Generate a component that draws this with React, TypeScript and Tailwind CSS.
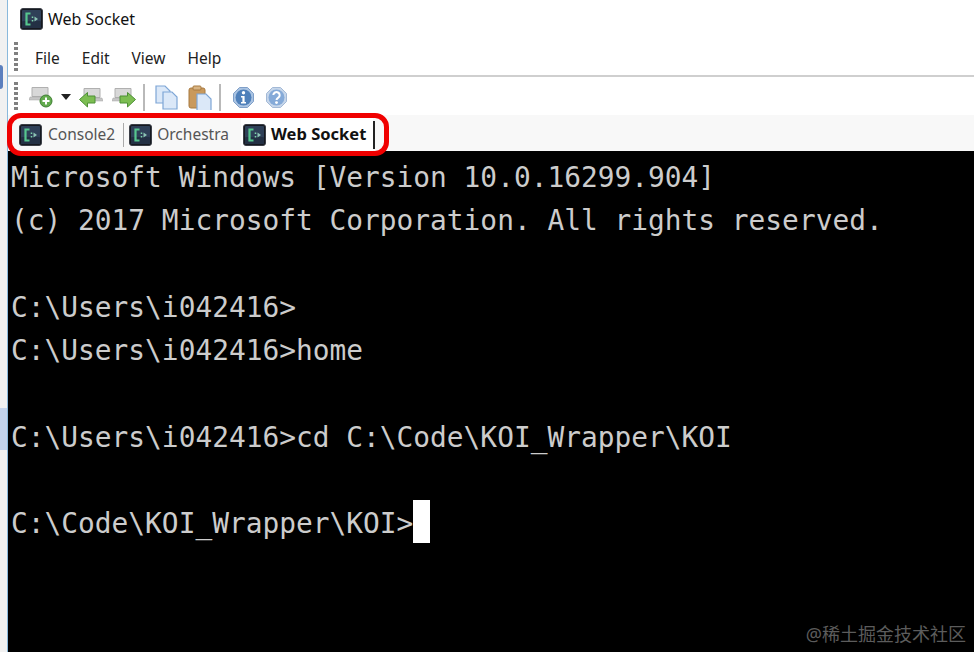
const lines = [
  "Microsoft Windows [Version 10.0.16299.904]",
  "(c) 2017 Microsoft Corporation. All rights reserved.",
  "",
  "C:\\Users\\i042416>",
  "C:\\Users\\i042416>home",
  "",
  "C:\\Users\\i042416>cd C:\\Code\\KOI_Wrapper\\KOI",
  "",
];

const menus = ["File", "Edit", "View", "Help"];

function ConsoleIcon() {
  return (
    <svg width="23" height="22" viewBox="0 0 23 22" className="shrink-0">
      <rect x="0.5" y="0.5" width="22" height="21" rx="2.5" fill="#15181f" stroke="#3b3f47" />
      <rect x="2" y="2" width="19" height="18" rx="1" fill="#2f4058" />
      <rect x="2" y="13" width="19" height="7" rx="1" fill="#233044" />
      <path d="M10.5 5.5H6.5V16.5H10.5" fill="none" stroke="#56c68e" strokeWidth="2.2" />
      <path d="M12.5 8.5v1.6M12.5 12v1.6" stroke="#7fd6ac" strokeWidth="1.5" />
      <path d="M14.5 8.5l3.5 2.5-3.5 2.5z" fill="#8cc4b4" />
    </svg>
  );
}

function Grip() {
  return (
    <div className="flex h-[29px] w-[4px] shrink-0 flex-col justify-between">
      {Array.from({ length: 6 }).map((_, i) => (
        <div key={i} className="h-[3px] w-[4px] bg-[#808080]" />
      ))}
    </div>
  );
}

function Monitor() {
  return (
    <>
      <path d="M3 1.5h16v9H3z" fill="#d8d8d8" stroke="#b0b0b0" />
      <path d="M1 11h20l1 3H0z" fill="#c6c6c6" stroke="#a4a4a4" strokeWidth="0.5" />
    </>
  );
}

function NewTabIcon() {
  return (
    <svg width="25" height="24" viewBox="0 0 25 24">
      <g transform="translate(0 1)">
        <Monitor />
      </g>
      <circle cx="17" cy="16" r="6" fill="#63ab4e" stroke="#3f7f33" />
      <path d="M13.5 16h7M17 12.5v7" stroke="#ffffff" strokeWidth="2" />
    </svg>
  );
}

function ArrowScreenIcon({ flip }: { flip?: boolean }) {
  return (
    <svg width="24" height="21" viewBox="0 0 24 21">
      <g transform={flip ? "translate(0 0)" : "translate(2 0)"}>
        <Monitor />
      </g>
      <path
        d={flip ? "M23.5 12.5l-8-7v3.5H8v7h7.5V20z" : "M0.5 12.5l8-7v3.5H16v7H8.5V20z"}
        fill="#7cbd52"
        stroke="#4d9035"
      />
    </svg>
  );
}

function PageShape({ x, y }: { x: number; y: number }) {
  return (
    <path
      d={`M${x} ${y}h9l5 5v12h-14z`}
      fill="#dbe8f8"
      stroke="#7ea6d6"
      strokeWidth="1.2"
    />
  );
}

function CopyIcon() {
  return (
    <svg width="24" height="25" viewBox="0 0 24 25">
      <PageShape x={1} y={1} />
      <PageShape x={8} y={7} />
    </svg>
  );
}

function PasteIcon() {
  return (
    <svg width="24" height="25" viewBox="0 0 24 25">
      <rect x="1" y="3" width="16" height="20" rx="2" fill="#c9995c" stroke="#a87a40" />
      <rect x="5" y="1" width="8" height="4" rx="1" fill="#d8b483" stroke="#a87a40" />
      <PageShape x={9} y={9} />
    </svg>
  );
}

function InfoIcon() {
  return (
    <svg width="21" height="21" viewBox="0 0 21 21">
      <path d="M6.5 0.5h8l6 6v8l-6 6h-8l-6-6v-8z" fill="#a9c3e2" stroke="#7f9fc8" strokeLinejoin="round" />
      <circle cx="10.5" cy="10.5" r="8" fill="#4f80ba" />
      <circle cx="10.5" cy="5.8" r="1.7" fill="#ffffff" />
      <path d="M8 9h3.6v6H13v1.4H8V15h1.4v-4.6H8z" fill="#ffffff" />
    </svg>
  );
}

function HelpIcon() {
  return (
    <svg width="21" height="21" viewBox="0 0 21 21">
      <path d="M6.5 0.5h8l6 6v8l-6 6h-8l-6-6v-8z" fill="#c6d6ea" stroke="#a3b9d6" strokeLinejoin="round" />
      <circle cx="10.5" cy="10.5" r="8" fill="#85aad8" />
      <path
        d="M7.3 8a3.2 3 0 1 1 5 2.6c-1 .7-1.8 1.1-1.8 2.4"
        fill="none"
        stroke="#ffffff"
        strokeWidth="2"
      />
      <circle cx="10.5" cy="15.6" r="1.4" fill="#ffffff" />
    </svg>
  );
}

function Divider({ className }: { className: string }) {
  return <div className={`h-[27px] w-[2px] shrink-0 bg-[#b9b9b9] ${className}`} />;
}

export default function App() {
  return (
    <div
      className="relative flex h-[652px] w-[974px] overflow-hidden bg-white"
      style={{ fontFamily: '"Noto Sans", sans-serif' }}
    >
      {/* sliver of whatever sits behind the window */}
      <div className="flex w-[8px] shrink-0 flex-col border-r border-[#8ab9dc] bg-[#f1f1f1]">
        <div className="h-[65px] shrink-0" />
        <div className="h-[24px] w-[3px] shrink-0 rounded-r-full bg-[#5b7fbe]" />
        <div className="h-[319px] shrink-0" />
        <div className="h-[42px] w-full shrink-0 bg-[#c4d4ec]" />
      </div>

      <div className="flex min-w-0 flex-1 flex-col">
        <div className="flex h-[38px] shrink-0 items-center gap-[5px] pl-[12px] text-[16px] text-[#111111]">
          <ConsoleIcon />
          <span>Web Socket</span>
        </div>

        <div className="flex h-[39px] shrink-0 items-center border-b-2 border-[#cfcfcf] pl-[6px]">
          <Grip />
          <div className="ml-[17px] flex gap-[22px] pt-[4px] text-[15.5px] text-[#222222]">
            {menus.map((m) => (
              <span key={m}>{m}</span>
            ))}
          </div>
        </div>

        <div className="flex h-[38px] shrink-0 items-center pl-[6px]">
          <Grip />
          <div className="ml-[11px] flex items-center pt-[2px]">
            <NewTabIcon />
            <div className="mr-[8px] ml-[7px] h-0 w-0 border-x-[5px] border-t-[6px] border-x-transparent border-t-[#222222]" />
            <ArrowScreenIcon />
            <div className="w-[9px]" />
            <ArrowScreenIcon flip />
            <Divider className="mr-[10px] ml-[7px]" />
            <CopyIcon />
            <div className="w-[9px]" />
            <PasteIcon />
            <Divider className="mr-[12px] ml-[7px]" />
            <InfoIcon />
            <div className="w-[12px]" />
            <HelpIcon />
          </div>
        </div>

        <div className="flex h-[36px] shrink-0 items-center bg-[#f8f8f8] pt-[3px] pl-[11px] text-[15.5px] text-[#555555]">
          <div className="flex items-center gap-[6px] pr-[8px]">
            <ConsoleIcon />
            <span>Console2</span>
          </div>
          <div className="h-[24px] w-px bg-[#aaaaaa]" />
          <div className="flex items-center gap-[5px] pr-[12px] pl-[5px]">
            <ConsoleIcon />
            <span>Orchestra</span>
          </div>
          <div className="flex h-full items-center gap-[5px] bg-white pr-[7px] pl-[2px] text-[16.5px] font-bold text-[#111111]">
            <ConsoleIcon />
            <span>Web Socket</span>
          </div>
          <div className="h-[28px] w-[2px] bg-[#222222]" />
        </div>

        <div
          className="relative min-h-0 flex-1 bg-black pt-[5px] pl-[3px] text-[27.85px] leading-[43.3px] text-[#cccccc]"
          style={{ fontFamily: '"DejaVu Sans Mono", monospace' }}
        >
          {lines.map((l, i) => (
            <div key={i} className="h-[43.3px] whitespace-pre">
              {l}
            </div>
          ))}
          <div className="flex h-[43.3px] whitespace-pre">
            <span>C:\Code\KOI_Wrapper\KOI&gt;</span>
            <span className="-mt-[2px] h-[43px] w-[17px] bg-white" />
          </div>
          <div
            className="absolute right-[8px] bottom-[8px] text-[18px] leading-[20px] text-[#5c5c5c]"
            style={{ fontFamily: '"Noto Sans", "Noto Sans CJK SC", sans-serif' }}
          >
            @稀土掘金技术社区
          </div>
        </div>
      </div>

      {/* red annotation round the tabs */}
      <div className="absolute top-[113px] left-[7px] h-[43px] w-[382px] rounded-[14px] border-[5px] border-[#f00000]" />
    </div>
  );
}
